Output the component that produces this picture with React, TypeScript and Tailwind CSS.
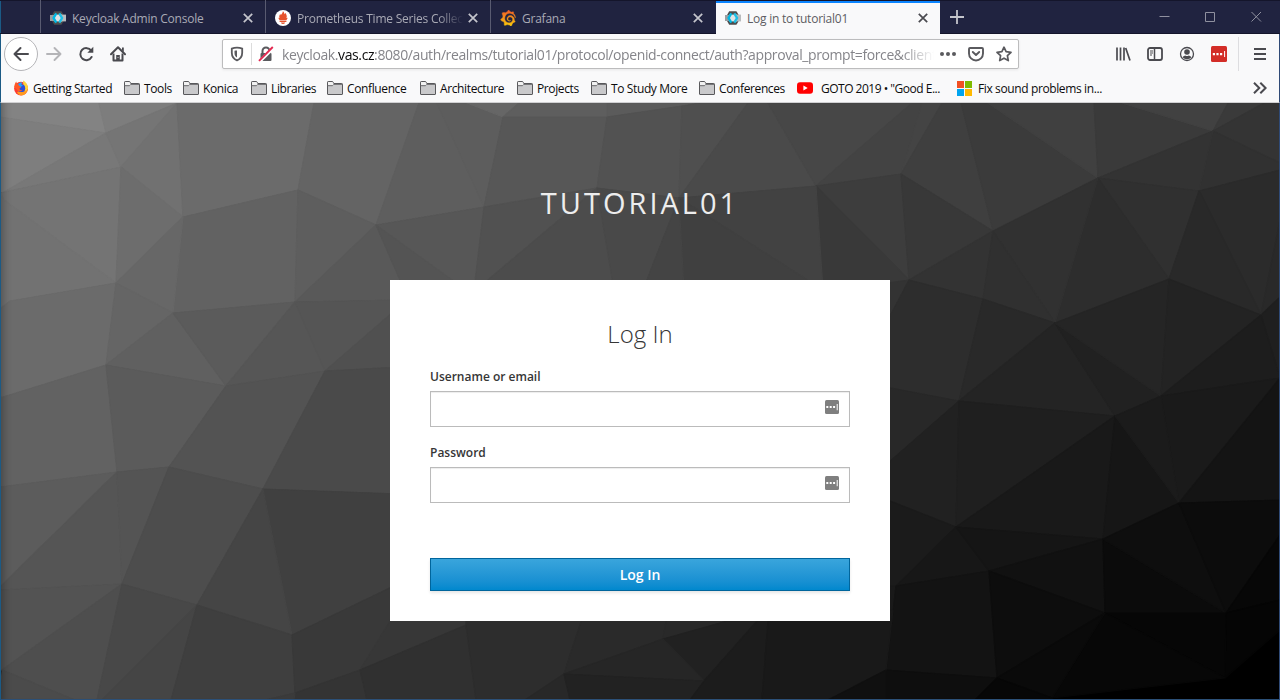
import type { ReactNode } from "react";
import { SiGrafana } from "react-icons/si";

type Facet = [string, string];

const facets: Facet[] = [
  ["0,103 99,103 106,133 0,117", "#838383"],
  ["99,103 177,103 106,133", "#7d7d7d"],
  ["0,117 106,133 4,192 0,192", "#7e7e7e"],
  ["4,192 106,133 121,167", "#787878"],
  ["106,133 177,103 121,167", "#757575"],
  ["121,167 177,103 183,217", "#717171"],
  ["0,193 121,167 116,283 4,200", "#747474"],
  ["0,193 4,200 116,283 10,301 0,309", "#727272"],
  ["121,167 183,217 116,283", "#6d6d6d"],
  ["177,103 314,103 298,190 183,217", "#6b6b6b"],
  ["314,103 419,103 376,225 298,190", "#646464"],
  ["183,217 298,190 295,302 173,313", "#626262"],
  ["183,217 173,313 116,283", "#676767"],
  ["298,190 376,225 295,302", "#5e5e5e"],
  ["0,309 10,301 116,283 106,365 3,397 0,397", "#6b6b6b"],
  ["116,283 173,313 106,365", "#656565"],
  ["106,365 173,313 226,386", "#606060"],
  ["173,313 295,302 226,386", "#5b5b5b"],
  ["295,302 325,371 226,386", "#565656"],
  ["295,302 376,225 400,280 400,300", "#595959"],
  ["295,302 400,300 400,306 325,371", "#555555"],
  ["325,371 400,306 400,367", "#505050"],
  ["0,397 3,397 106,365 117,472 0,487", "#626262"],
  ["106,365 226,386 169,467 117,472", "#5b5b5b"],
  ["226,386 325,371 263,489 169,467", "#535353"],
  ["325,371 400,367 400,494 263,489", "#4a4a4a"],
  ["0,487 117,472 0,587", "#5c5c5c"],
  ["117,472 122,584 0,590 0,587", "#555555"],
  ["117,472 169,467 122,584", "#545454"],
  ["169,467 263,489 197,605 122,584", "#4d4d4d"],
  ["263,489 400,494 400,583 292,635", "#404040"],
  ["263,489 292,635 197,605", "#454545"],
  ["0,590 122,584 2,670 0,670", "#535353"],
  ["2,670 122,584 97,700 75,700", "#4e4e4e"],
  ["2,670 75,700 0,700", "#4b4b4b"],
  ["122,584 197,605 102,700 97,700", "#484848"],
  ["197,605 171,700 102,700", "#454545"],
  ["197,605 292,635 295,693 265,700 171,700", "#3f3f3f"],
  ["292,635 400,583 400,610 360,670 295,693", "#393939"],
  ["295,693 360,670 367,700 294,700", "#343434"],
  ["265,700 295,693 294,700", "#3b3b3b"],
  ["376,225 484,207 437,103 419,103", "#5e5e5e"],
  ["437,103 467,103 503,117 484,207", "#5d5d5d"],
  ["467,103 519,103 503,117", "#666666"],
  ["519,103 607,103 607,117 503,117", "#5e5e5e"],
  ["503,117 607,117 597,188 484,207", "#575757"],
  ["607,103 700,103 682,106 607,117", "#5b5b5b"],
  ["607,117 682,106 679,198 597,188", "#525252"],
  ["682,106 700,103 748,103 679,198", "#4f4f4f"],
  ["748,103 768,103 816,186 679,198", "#4a4a4a"],
  ["768,103 912,103 816,186", "#474747"],
  ["816,186 912,103 922,103 901,174", "#434343"],
  ["922,103 942,103 901,174", "#444444"],
  ["816,186 901,174 909,280", "#3d3d3d"],
  ["816,186 909,280 909,300 823,300", "#393939"],
  ["679,198 816,186 823,290", "#424242"],
  ["679,198 823,290 684,290", "#404040"],
  ["376,225 484,207 474,290 452,280", "#575757"],
  ["376,225 452,280 460,300 400,280", "#545454"],
  ["484,207 597,188 476,290 474,290", "#515151"],
  ["597,188 614,290 476,290", "#4c4c4c"],
  ["597,188 679,198 643,290 614,290", "#494949"],
  ["679,198 684,290 643,290", "#444444"],
  ["942,103 961,103 993,231 901,174", "#3f3f3f"],
  ["961,103 988,103 1098,178 993,231", "#3b3b3b"],
  ["988,103 1094,103 1098,178", "#404040"],
  ["1094,103 1122,103 1213,131 1098,178", "#3a3a3a"],
  ["1122,103 1228,103 1213,131", "#414141"],
  ["1228,103 1264,103 1213,131", "#3a3a3a"],
  ["1264,103 1280,103 1280,163 1213,131", "#343434"],
  ["1213,131 1280,163 1280,170 1199,191", "#313131"],
  ["1098,178 1213,131 1199,191", "#333333"],
  ["1098,178 1199,191 1169,279", "#303030"],
  ["1199,191 1280,170 1280,220 1261,315", "#2b2b2b"],
  ["1280,220 1280,297 1261,315", "#292929"],
  ["1261,315 1280,297 1280,378", "#1f1f1f"],
  ["1199,191 1261,315 1169,279", "#292929"],
  ["1098,178 1169,279 1055,323", "#2d2d2d"],
  ["993,231 1098,178 1055,323", "#313131"],
  ["901,174 993,231 909,280", "#383838"],
  ["909,280 993,231 983,299", "#333333"],
  ["993,231 1055,323 983,299", "#303030"],
  ["880,284 909,280 880,335", "#333333"],
  ["880,335 909,280 983,299 959,401 880,386", "#2d2d2d"],
  ["983,299 1055,323 959,401", "#292929"],
  ["1055,323 1115,416 959,401", "#242424"],
  ["1055,323 1161,396 1115,416", "#212121"],
  ["1055,323 1169,279 1161,396", "#252525"],
  ["1169,279 1261,315 1161,396", "#232323"],
  ["1261,315 1280,378 1161,396", "#1d1d1d"],
  ["1161,396 1280,378 1262,400 1179,503", "#1a1a1a"],
  ["1280,378 1280,500 1179,503", "#141414"],
  ["880,386 959,401 880,470", "#282828"],
  ["959,401 956,527 880,497 880,470", "#212121"],
  ["959,401 1115,416 956,527", "#1f1f1f"],
  ["956,527 1115,416 1103,539", "#191919"],
  ["1115,416 1179,503 1103,539", "#161616"],
  ["1115,416 1161,396 1179,503", "#1b1b1b"],
  ["880,497 956,527 896,586 880,586", "#1b1b1b"],
  ["880,586 896,586 892,625 880,625", "#191919"],
  ["956,527 989,571 896,586", "#171717"],
  ["956,527 1103,539 989,571", "#151515"],
  ["896,586 989,571 997,678 886,670", "#131313"],
  ["989,571 1103,539 1105,613", "#111111"],
  ["989,571 1105,613 997,678", "#0d0d0d"],
  ["1103,539 1226,613 1105,613", "#0b0b0b"],
  ["1103,539 1179,503 1226,613", "#0e0e0e"],
  ["1179,503 1280,500 1280,535 1226,613", "#0c0c0c"],
  ["1280,535 1280,600 1226,613", "#070707"],
  ["1226,613 1280,600 1280,630 1225,678", "#050505"],
  ["1105,613 1226,613 1225,678", "#060606"],
  ["1105,613 1225,678 1052,698", "#070707"],
  ["997,678 1105,613 1052,698", "#0a0a0a"],
  ["886,670 997,678 975,700 886,700", "#0e0e0e"],
  ["997,678 1052,698 1052,700 975,700", "#070707"],
  ["360,670 390,621 400,600 466,610 466,625", "#373737"],
  ["360,670 466,625 476,700 367,700", "#303030"],
  ["466,625 466,610 585,610 564,674 525,700 476,700", "#2d2d2d"],
  ["585,610 668,610 663,639 564,674", "#2a2a2a"],
  ["668,610 750,615 663,639", "#292929"],
  ["727,621 757,621 704,681 663,639", "#212121"],
  ["564,674 663,639 704,681", "#262626"],
  ["525,700 564,674 570,700", "#282828"],
  ["564,674 704,681 690,700 570,700", "#222222"],
  ["757,621 768,621 762,700 690,700 704,681", "#1c1c1c"],
  ["768,621 893,610 886,670 828,700 762,700", "#191919"],
  ["828,700 886,670 886,700", "#101010"],
];

function Facets() {
  return (
    <svg viewBox="0 103 1280 597" width="1280" height="597" className="absolute inset-0">
      {facets.map(([points, fill]) => (
        <polygon key={points} points={points} fill={fill} stroke={fill} strokeWidth="1.2" strokeLinejoin="round" />
      ))}
    </svg>
  );
}

function KeycloakIcon() {
  return (
    <svg width="16" height="16" viewBox="0 0 16 16">
      <path d="M4.200 1.300h7.200l2 3.200v7l-2 3.200H4.200L.8 8.800V7.200z" fill="#4d4d4d" />
      <path d="M11 4.600h5v6.800h-5z" fill="#b9bbbd" />
      <path d="M0 5h4v6H0z" fill="#9a9da0" />
      <path d="M4 4.600h8v6.800H4z" fill="#dfe3e5" />
      <path d="M6.300 3.400 3.600 8l2.700 4.600" fill="none" stroke="#00b8e3" strokeWidth="2.400" />
      <path d="M9.300 3.400 12 8l-2.700 4.600" fill="none" stroke="#1fbfe6" strokeWidth="2.400" />
    </svg>
  );
}

function PrometheusIcon() {
  return (
    <svg width="16" height="16" viewBox="0 0 16 16">
      <circle cx="8" cy="8" r="8" fill="#fff" />
      <path
        d="M7.900 1.200c1.500 1 1.300 2.300 1.800 3.100.4-.5.500-1 .4-1.500 1.200 1.300 2.300 3.400 1.300 5.300l1.300-.3c-.2 1-.8 1.800-1.400 2.400H4.700c-.6-.6-1.200-1.400-1.400-2.400l1.300.3c-.9-1.700.1-3.200.6-4.400.2.700.3 1 .7 1.500C6.500 3.900 7.700 3 7.900 1.200z"
        fill="#e6522c"
      />
      <path d="M4.600 10.800h6.800v1.200H4.600zM5.900 12.600h4.200q-.4 1.500-2.100 1.500t-2.100-1.500z" fill="#e6522c" />
    </svg>
  );
}

function GrafanaIcon() {
  return (
    <>
      <svg width="0" height="0" className="absolute">
        <linearGradient id="grafana" x1="0" y1="0" x2="0" y2="1">
          <stop offset="0" stopColor="#f05a28" />
          <stop offset="1" stopColor="#fbca0a" />
        </linearGradient>
      </svg>
      <SiGrafana size={16} fill="url(#grafana)" stroke="url(#grafana)" strokeWidth="0.6" />
    </>
  );
}

function Close({ dark }: { dark?: boolean }) {
  return (
    <svg width="10" height="10" viewBox="0 0 10 10" className="shrink-0">
      <path d="M.8.8l8.4 8.4M9.2.8.8 9.2" stroke={dark ? "#4a4a4f" : "#c4c5cc"} strokeWidth="1.7" />
    </svg>
  );
}

function Tab({ icon, label, active, fade }: { icon: ReactNode; label: ReactNode; active?: boolean; fade?: boolean }) {
  return (
    <div
      className={
        active
          ? "ml-px flex h-[34px] w-[224px] items-center border-t-2 border-[#0a84ff] bg-[#f9f9fa] pr-[12px] pb-[2px] pl-[9px] text-[#5d5d62]"
          : "flex h-[33px] w-[225px] items-center border-l border-[#595b70] pt-[2px] pr-[12px] pl-[9px] text-[#a9aab5]"
      }
    >
      <div className="flex w-[22px] shrink-0 items-center">{icon}</div>
      <div
        className={
          fade
            ? "relative top-px w-[166px] overflow-hidden text-[12px] leading-4 tracking-[-0.23px] whitespace-nowrap [mask-image:linear-gradient(to_right,#000_85%,transparent)]"
            : "relative top-px w-[170px] overflow-hidden text-[12px] leading-4 tracking-[-0.23px] whitespace-nowrap"
        }
      >
        {label}
      </div>
      <div className="ml-auto">
        <Close dark={active} />
      </div>
    </div>
  );
}

function Folder() {
  return (
    <svg width="16" height="14" viewBox="0 0 16 14" className="shrink-0">
      <path d="M.5 13V1.2Q.5.5 1.2.5h4.4l1.2 2h8q.7 0 .7.7V13q0 .5-.5.5H1q-.5 0-.5-.5z" fill="#c9c9cb" stroke="#58585b" />
      <path d="M1 1h4.400l1 2H15v1.200H1z" fill="#f2f2f2" />
      <path d="M.5 4.700h5l1-1.100h9" fill="none" stroke="#6b6b6e" />
    </svg>
  );
}

function Firefox() {
  return (
    <svg width="16" height="16" viewBox="0 0 16 16" className="shrink-0">
      <circle cx="8" cy="8.600" r="6.900" fill="#ff3b30" />
      <path d="M8 15.500a6.900 6.900 0 0 0 6.900-6.900c0-3-1.500-4.600-2.900-6.100.3 1.600.3 2.600-.4 3.500L4 12.500A6.900 6.900 0 0 0 8 15.500z" fill="#ff9a1f" />
      <path d="M10 .6c2.800 1.300 5.100 4.300 4.900 8l-2.300 3L10.400 5z" fill="#ffd43a" />
      <circle cx="8.300" cy="8.200" r="3.900" fill="#2c4fd8" />
      <path d="M5 4.300c1-1.500 3-2 4.500-1.500L8 4.600l2 .7-2.500 2C6 7 5 6 5 4.300z" fill="#1fa2ff" />
      <path d="M1.300 7C1.500 5 2 3.200 3.200 1.600c.2 1 .6 1.600 1.200 2L6.500 6l1.800 1.200-1.800 1.300c0 1.300 1.500 2 3 1.600-1 1.800-4.500 2-5.700-.6z" fill="#ff5a26" />
    </svg>
  );
}

function YouTube() {
  return (
    <svg width="16" height="16" viewBox="0 0 16 16" className="shrink-0">
      <rect x="0" y="2.300" width="16" height="11.400" rx="3" fill="#f00" />
      <path d="M6.400 5.500v5L10.700 8z" fill="#fff" />
    </svg>
  );
}

function Microsoft() {
  return (
    <div className="grid size-[15px] shrink-0 grid-cols-2 gap-px">
      <div className="bg-[#f25022]" />
      <div className="bg-[#7fba00]" />
      <div className="bg-[#00a4ef]" />
      <div className="bg-[#ffb900]" />
    </div>
  );
}

function Bookmark({ icon, width, gap, children }: { icon?: ReactNode; width: string; gap?: string; children: ReactNode }) {
  return (
    <div className={`flex shrink-0 items-center ${width} ${gap ?? "gap-1"}`}>
      {icon ?? <Folder />}
      <span className="pt-px">{children}</span>
    </div>
  );
}

function FillIcon() {
  return (
    <svg width="14" height="14" viewBox="0 0 14 14">
      <rect width="14" height="14" rx="1.500" fill="#7f7f7f" />
      <path d="M1.300 6h2v2h-2zM4.700 6h2v2h-2zM8.100 6h2v2h-2zM11.700 4h1v6.300h-1z" fill="#fff" />
    </svg>
  );
}

function Field({ label }: { label: string }) {
  return (
    <div className="h-[76px]">
      <div className="h-6 text-[12px] leading-5 font-semibold text-[#363636]">{label}</div>
      <div className="flex h-9 items-start justify-end border border-[#bbb] bg-white pt-2 pr-[10px] shadow-[inset_0_1px_1px_rgba(3,3,3,0.075)]">
        <FillIcon />
      </div>
    </div>
  );
}

export default function App() {
  return (
    <div className="flex h-[700px] w-[1280px] flex-col overflow-hidden bg-[#f9f9fa] font-['Open_Sans','Noto_Sans',sans-serif]">
      <div className="flex h-[34px] shrink-0 border-t border-b border-[#14152b] bg-[#202340]">
        <div className="w-10 shrink-0 border-l border-[#1b5a85]" />
        <div className="flex h-[33px]">
          <div className="-mt-px flex">
            <Tab icon={<KeycloakIcon />} label="Keycloak Admin Console" />
            <Tab fade icon={<PrometheusIcon />} label="Prometheus Time Series Collection" />
            <Tab icon={<GrafanaIcon />} label="Grafana" />
          </div>
          <Tab active icon={<KeycloakIcon />} label="Log in to tutorial01" />
        </div>
        <svg width="14" height="14" viewBox="0 0 14 14" className="mt-[9px] ml-[10px]">
          <path d="M7 0v14M0 7h14" stroke="#c4c5cc" strokeWidth="1.800" />
        </svg>
        <svg width="104" height="12" viewBox="0 0 104 12" className="mt-[10px] mr-[17px] ml-auto">
          <path d="M.5 5.500h10M46.500 1.500h9v9h-9zM92.500 1l9.500 9.500M102 1l-9.500 9.500" fill="none" stroke="#8f909f" />
        </svg>
      </div>

      <div className="flex h-10 shrink-0 items-center border-r border-l border-r-[#2f4a76] border-l-[#1b5a85] pl-[3px] text-[#4a4a4f]">
        <div className="flex size-[34px] items-center justify-center rounded-full border border-[#b5b5b8] bg-white">
          <svg width="16" height="16" viewBox="0 0 16 16" fill="none" stroke="currentColor" strokeWidth="2" strokeLinecap="round" strokeLinejoin="round">
            <path d="M15 8H1.500M7.500 2 1.500 8l6 6" />
          </svg>
        </div>
        <svg width="16" height="16" viewBox="0 0 16 16" className="ml-2" fill="none" stroke="#b4b4b7" strokeWidth="1.900" strokeLinecap="round" strokeLinejoin="round">
          <path d="M1 8h13.500M8.500 2l6 6-6 6" />
        </svg>
        <svg width="16" height="16" viewBox="0 0 16 16" className="ml-4" fill="none" stroke="currentColor" strokeWidth="2">
          <path d="M13.200 4.600A6 6 0 1 0 13.600 11" strokeLinecap="round" />
          <path d="M15.300.800v6h-6z" fill="currentColor" stroke="none" />
        </svg>
        <svg width="16" height="16" viewBox="0 0 16 16" className="ml-4">
          <path d="M1 8.300 8 1.300l7 7" fill="none" stroke="currentColor" strokeWidth="2" strokeLinecap="round" strokeLinejoin="round" />
          <path d="M12 1.500h1.800V6L12 4.200z" fill="currentColor" />
          <path d="M3.500 7.500V14.500h9V7.500" fill="none" stroke="currentColor" strokeWidth="2" strokeLinejoin="round" />
          <path d="M6.200 9h3.600v5.500H6.200z" fill="currentColor" />
          <path d="M7.600 11.200h.9v.9h-.9z" fill="#fff" />
        </svg>

        <div className="ml-[96px] flex h-[30px] w-[797px] items-center rounded-[2px] border border-[#bcbcbd] bg-white pr-1 pl-1.5 shadow-[0_1px_3px_rgba(0,0,0,0.08)]">
          <svg width="16" height="16" viewBox="0 0 16 16" className="shrink-0" fill="none">
            <path d="M8 1.600c2 0 3.800.400 5.200 1v4.200c0 3.600-1.800 6.200-5.200 7.600-3.400-1.400-5.200-4-5.200-7.600V2.600c1.400-.600 3.200-1 5.200-1z" stroke="#5a5a5e" strokeWidth="1.800" />
            <path d="M8 4.500v7.100c-1.700-1-2.500-2.600-2.500-4.700V4.800c.700-.2 1.500-.3 2.500-.3z" fill="#5a5a5e" />
          </svg>
          <div className="ml-1.5 h-[22px] w-px bg-[#dcdcdc]" />
          <svg width="16" height="16" viewBox="0 0 16 16" className="ml-1.5 shrink-0">
            <path d="M4.500 7.500V5a3.500 3.500 0 0 1 7 0v2.500" fill="none" stroke="#5a5a5e" strokeWidth="2" />
            <rect x="2.500" y="7" width="11" height="8" rx="1" fill="#5a5a5e" />
            <path d="M1.200 16 15.600 1.600" stroke="#fff" strokeWidth="3.200" />
            <path d="M1 14.800 14.800 1" stroke="#e22850" strokeWidth="1.900" />
          </svg>
          <div className="relative top-px ml-2 w-[652px] overflow-hidden text-[14px] leading-5 tracking-[-0.4px] whitespace-nowrap text-[#85858a] [mask-image:linear-gradient(to_right,#000_95%,transparent)]">
            keycloak.<span className="text-[#0c0c0d]">vas.cz</span>:8080/auth/realms/tutorial01/protocol/openid-connect/auth?approval_prompt=force&amp;client
          </div>
          <svg width="16" height="16" viewBox="0 0 16 16" className="ml-[6px] shrink-0" fill="#5a5a5e">
            <circle cx="2" cy="8" r="2" />
            <circle cx="8" cy="8" r="2" />
            <circle cx="14" cy="8" r="2" />
          </svg>
          <svg width="16" height="16" viewBox="0 0 16 16" className="ml-3 shrink-0" fill="none" stroke="#5a5a5e" strokeWidth="1.900" strokeLinecap="round" strokeLinejoin="round">
            <path d="M2 2h12q1 0 1 1v4.500a7 7 0 0 1-14 0V3q0-1 1-1z" />
            <path d="M4.800 6 8 9l3.200-3" />
          </svg>
          <svg width="16" height="16" viewBox="0 0 16 16" className="ml-3 shrink-0" fill="none" stroke="#5a5a5e" strokeWidth="1.700" strokeLinejoin="round">
            <path d="m8 1.200 2.100 4.500 4.900.600-3.600 3.400.9 4.900L8 12.200l-4.300 2.400.9-4.900L1 6.300l4.900-.6z" />
          </svg>
        </div>

        <svg width="16" height="16" viewBox="0 0 16 16" className="ml-[96px]" stroke="currentColor" strokeWidth="2">
          <path d="M2 1.500v13M5.500 1.500v13M9 1.500v13M10.700 2l4.300 12.500" strokeWidth="1.700" />
        </svg>
        <svg width="16" height="16" viewBox="0 0 16 16" className="ml-4" fill="none" stroke="currentColor" strokeWidth="1.800">
          <rect x="1" y="2" width="14" height="12" rx="2" />
          <path d="M7.500 2v12" strokeWidth="1.500" />
          <path d="M3 5h3M3 7h3M3 9h2" strokeWidth="1" />
        </svg>
        <svg width="16" height="16" viewBox="0 0 16 16" className="ml-4">
          <circle cx="8" cy="8" r="6.500" fill="none" stroke="currentColor" strokeWidth="1.300" />
          <circle cx="8" cy="6" r="2.800" fill="currentColor" />
          <path d="M3.600 11.300c.8-1.300 2-1.600 2.600-1.700q1.800 1 3.600 0c.6.100 1.800.400 2.600 1.700-1 1.300-2.600 1.900-4.400 1.900s-3.400-.6-4.400-1.900z" fill="currentColor" />
        </svg>
        <svg width="16" height="16" viewBox="0 0 16 16" className="ml-4">
          <rect width="16" height="16" rx="1.500" fill="#d32d27" />
          <path d="M1.800 7h2.200v2.200H1.800zM5.400 7h2.200v2.200H5.400zM9 7h2.200v2.200H9zM13.100 5h1v6h-1z" fill="#fff" />
        </svg>
        <div className="ml-[11px] h-[34px] w-px bg-[#dddde0]" />
        <svg width="12" height="12" viewBox="0 0 12 12" className="ml-[15px]" stroke="currentColor" strokeWidth="1.800">
          <path d="M0 1h12M0 6h12M0 11h12" />
        </svg>
      </div>

      <div className="flex h-[29px] shrink-0 items-center border-r border-b border-l border-r-[#2f4a76] border-b-[#d0d0d2] border-l-[#1b5a85] pl-3 text-[12px] tracking-[-0.38px] whitespace-nowrap text-[#0c0c0d]">
        <Bookmark width="w-[111px]" icon={<Firefox />}>Getting Started</Bookmark>
        <Bookmark width="w-[59px]">Tools</Bookmark>
        <Bookmark width="w-[68px]">Konica</Bookmark>
        <Bookmark width="w-[76px]">Libraries</Bookmark>
        <Bookmark width="w-[93px]">Confluence</Bookmark>
        <Bookmark width="w-[97px]">Architecture</Bookmark>
        <Bookmark width="w-[74px]">Projects</Bookmark>
        <Bookmark width="w-[108px]">To Study More</Bookmark>
        <Bookmark width="w-[98px]">Conferences</Bookmark>
        <Bookmark width="w-[160px] tracking-[-0.5px]" gap="gap-2" icon={<YouTube />}>GOTO 2019 • "Good E...</Bookmark>
        <Bookmark width="w-[150px]" gap="gap-[6px]" icon={<Microsoft />}>Fix sound problems in...</Bookmark>
        <svg width="14" height="12" viewBox="0 0 14 12" className="mr-3 ml-auto" fill="none" stroke="#4a4a4f" strokeWidth="2">
          <path d="m1 .700 5.300 5.300L1 11.300M7.300.700l5.300 5.300-5.300 5.300" />
        </svg>
      </div>

      <div className="relative h-[597px] shrink-0 overflow-hidden bg-black">
        <Facets />
        <div className="relative flex h-full flex-col items-center border-r border-b border-l border-r-[#2f4a76] border-b-[#2b5078] border-l-[#1b5a85] shadow-[inset_10px_0_9px_-8px_rgba(0,0,0,0.300)]">
          <div className="mt-[80px] h-[97px] text-[29px] leading-10 font-normal tracking-[3px] text-[#ededed] uppercase">tutorial01</div>
          <div className="flex h-[341px] w-[500px] flex-col bg-white px-10 pt-[38px]">
            <div className="h-[49px] text-center text-[24px] leading-8 font-light text-[#363636]">Log In</div>
            <Field label="Username or email" />
            <Field label="Password" />
            <div className="mt-[39px] flex h-[33px] items-center justify-center border border-[#00659c] bg-linear-to-b from-[#39a5dc] to-[#0088ce] text-[14px] font-semibold text-white shadow-[0_2px_3px_rgba(3,3,3,0.100)]">
              Log In
            </div>
          </div>
        </div>
      </div>
    </div>
  );
}
